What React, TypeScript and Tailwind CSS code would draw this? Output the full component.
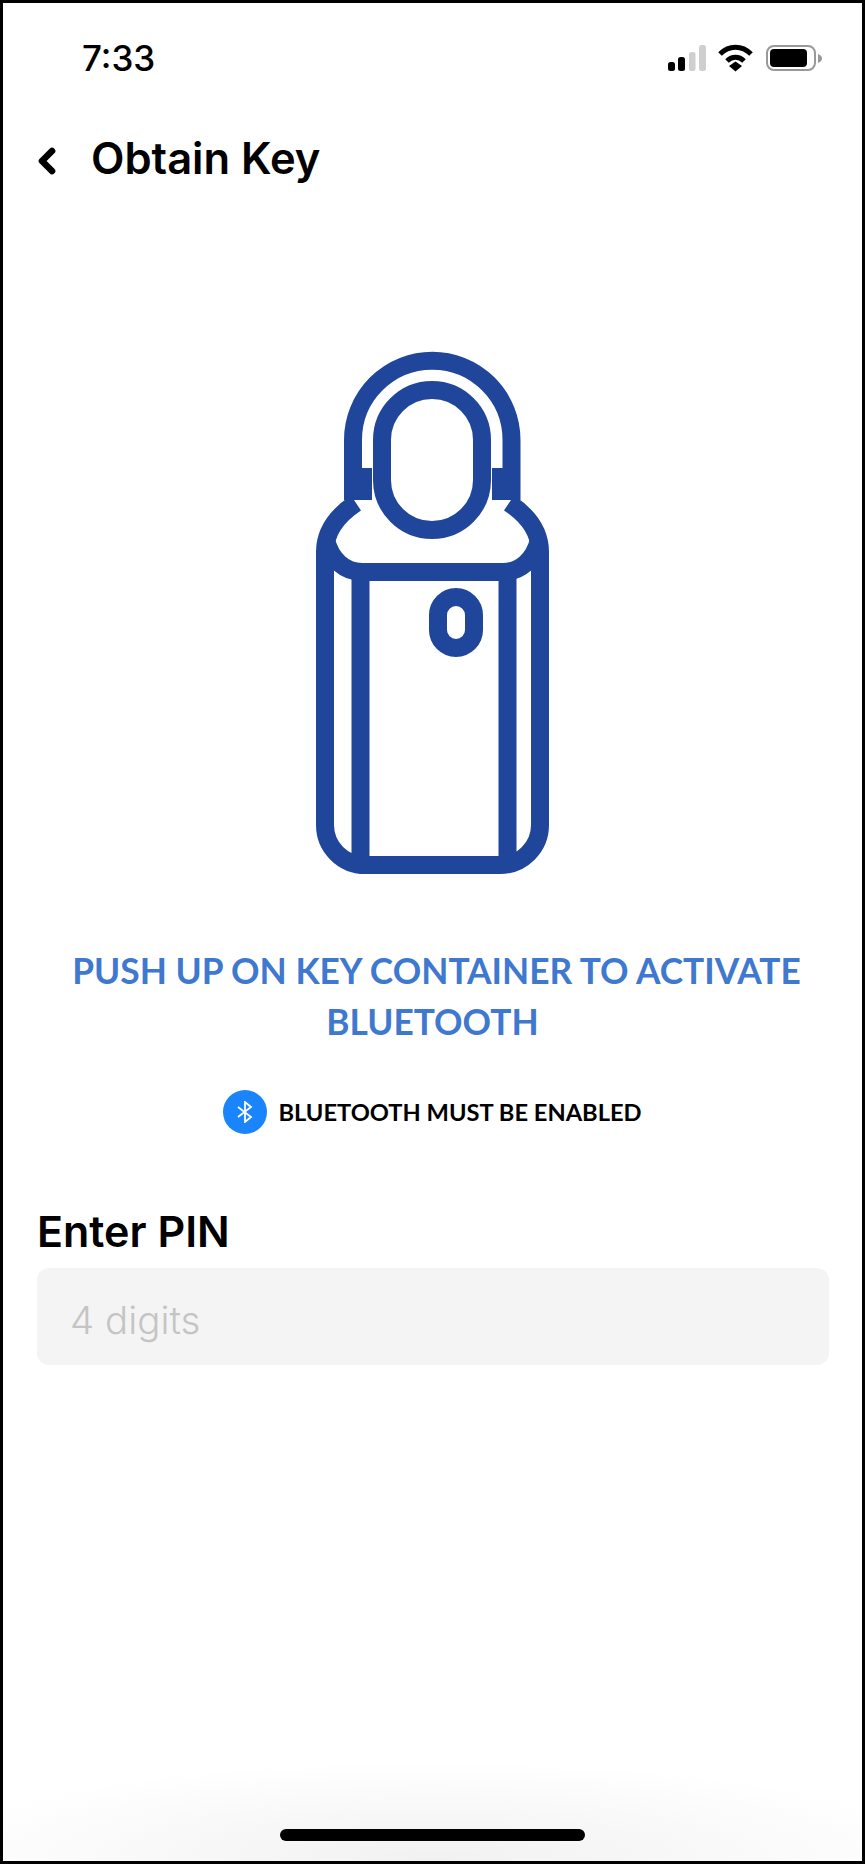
import { ChevronLeft } from "lucide-react";

function StatusIcons() {
  return (
    <svg viewBox="660 40 165 36" className="w-[165px] h-[36px] mt-[2px]" fill="none">
      <rect x="668" y="62" width="7" height="9" rx="2.5" fill="#000" />
      <rect x="678" y="57" width="7" height="14" rx="2.5" fill="#000" />
      <rect x="689" y="52" width="6.5" height="19" rx="2.5" fill="#cfcfcf" />
      <rect x="699" y="45" width="7" height="26" rx="2.5" fill="#cfcfcf" />
      <path d="M720 54 C729 45 742 45 751 54" stroke="#000" strokeWidth="5" />
      <path d="M727 61 C732 56 739 56 744 61" stroke="#000" strokeWidth="5" />
      <path d="M729 66 L735.500 61.500 L742 66 L735.500 71.500 Z" fill="#000" />
      <rect x="767" y="46" width="48" height="24" rx="7" stroke="#999" strokeWidth="2" />
      <rect x="770" y="49" width="37" height="18" rx="4" fill="#000" />
      <path d="M818 54 C821 55 822 57 822 58.500 C822 60 821 62 818 63 Z" fill="#999" />
    </svg>
  );
}

function LockIllustration() {
  return (
    <svg viewBox="300 340 265 545" className="w-[265px] h-[545px]" fill="none" stroke="#20469b" strokeWidth="18">
      {/* shackle */}
      <path d="M353 500 V440 A79 79 0 0 1 511.500 440 V500" />
      <rect x="382" y="390" width="100" height="140" rx="50" />
      <rect x="344" y="468" width="28" height="32" fill="#20469b" stroke="none" />
      <rect x="492" y="468" width="28" height="32" fill="#20469b" stroke="none" />
      {/* body */}
      <path d="M356 503 C338 515 325 530 325 552 V825 A40 40 0 0 0 365 865 H500 A40 40 0 0 0 540 825 V552 C540 530 527 515 509 503" />
      <path d="M326 540 C331 560 345 572 362 572 H503 C520 572 534 560 539 540" />
      <path d="M360.500 572 V865 M507.500 572 V865" />
      {/* button */}
      <rect x="438" y="597" width="36" height="51" rx="18" />
    </svg>
  );
}

export default function App() {
  return (
    <div className="w-[865px] h-[1864px] border-[3px] border-black bg-white flex flex-col font-['Inter',sans-serif] text-black overflow-hidden">
      {/* status bar */}
      <div className="h-[125px] flex items-start justify-between pl-[79px] pr-[37px] pt-[35px]">
        <span className="text-[35px] leading-[40px] font-medium">7:33</span>
        <StatusIcons />
      </div>

      {/* header */}
      <div className="h-[60px] flex items-center pl-[24px] gap-[24px]">
        <ChevronLeft className="w-[40px] h-[40px] mt-[6px]" strokeWidth={4} />
        <h1 className="text-[43.500px] leading-[60px] font-semibold">Obtain Key</h1>
      </div>

      <div className="flex justify-center mt-[152px] -ml-[1px]">
        <LockIllustration />
      </div>

      <p className="mt-[60px] text-center text-[35.300px] leading-[51px] font-bold text-[#3f78cf] font-['Lato',sans-serif]">
        <span className="block pl-[8px]">PUSH UP ON KEY CONTAINER TO ACTIVATE</span>
        <span className="block">BLUETOOTH</span>
      </p>

      <div className="mt-[43px] flex items-center justify-center gap-[11px]">
        <div className="w-[44px] h-[44px] rounded-full bg-[#1a84fb] flex items-center justify-center">
          <svg viewBox="0 0 16 22" className="w-[16px] h-[22px]" fill="none" stroke="#fff" strokeWidth="1.800">
            <path d="M1 6 L14 16 L8 21 V1 L14 6 L1 16" />
          </svg>
        </div>
        <span className="text-[23.700px] leading-[30px] font-bold font-['Lato',sans-serif]">BLUETOOTH MUST BE ENABLED</span>
      </div>

      <div className="mt-[69px] px-[34px]">
        <label className="block text-[43px] leading-[56px] font-semibold">Enter PIN</label>
        <input
          placeholder="4 digits"
          className="mt-[9px] w-[792px] h-[97px] rounded-[12px] bg-[#f4f4f4] pl-[33px] pr-[35px] pt-[7px] text-[38.500px] font-light outline-none placeholder:text-[#c4c4c4]"
        />
      </div>

      {/* home indicator */}
      <div className="mt-auto h-[100px] flex items-start justify-center pt-[68px] bg-[radial-gradient(ellipse_60%_100%_at_50%_100%,#f1f1f1,#ffffff)]">
        <div className="w-[305px] h-[12px] rounded-[6px] bg-black" />
      </div>
    </div>
  );
}
